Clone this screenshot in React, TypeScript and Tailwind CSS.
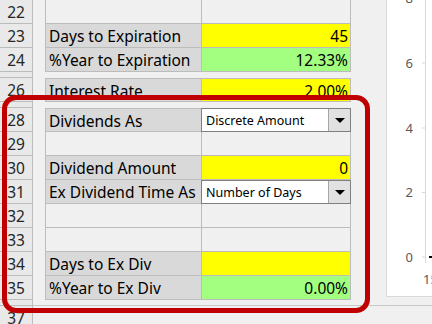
import React from "react";

type Row = {
  n: number;
  kind: "empty" | "value" | "select" | "spacer" | "blank";
  label?: string;
  value?: string;
  fill?: "yellow" | "green";
  top?: boolean;
};

const rows: Row[] = [
  { n: 22, kind: "empty" },
  { n: 23, kind: "value", label: "Days to Expiration", value: "45", fill: "yellow" },
  { n: 24, kind: "value", label: "%Year to Expiration", value: "12.33%", fill: "green" },
  { n: 25, kind: "spacer" },
  { n: 26, kind: "value", label: "Interest Rate", value: "2.00%", fill: "yellow", top: true },
  { n: 27, kind: "spacer" },
  { n: 28, kind: "select", label: "Dividends As", value: "Discrete Amount", top: true },
  { n: 29, kind: "empty" },
  { n: 30, kind: "value", label: "Dividend Amount", value: "0", fill: "yellow" },
  { n: 31, kind: "select", label: "Ex Dividend Time As", value: "Number of Days" },
  { n: 32, kind: "empty" },
  { n: 33, kind: "empty" },
  { n: 34, kind: "value", label: "Days to Ex Div", value: "", fill: "yellow" },
  { n: 35, kind: "value", label: "%Year to Ex Div", value: "0.00%", fill: "green" },
  { n: 36, kind: "spacer" },
  { n: 37, kind: "blank" },
];

const RowHeader = ({ n, small }: { n: number; small?: boolean }) => (
  <div
    className={`w-[33px] shrink-0 border-r border-b border-[#bcbcbc] bg-[#e9e9e9] flex items-center justify-center pt-[3px] text-[15.5px] text-[#262626] ${
      small ? "h-[6px]" : "h-[24px]"
    }`}
  >
    {small ? null : n}
  </div>
);

const Dropdown = ({ text }: { text: string }) => (
  <div className="w-[150px] h-[24px] flex bg-white border border-[#7f7f7f]">
    <div className="flex-1 flex items-center pl-[4px] pt-[2px] text-[12.5px] text-black">{text}</div>
    <div className="w-[22px] flex items-center justify-center bg-[#e1e1e1] border-l border-[#a6a6a6]">
      <div className="w-0 h-0 border-l-[5px] border-r-[5px] border-t-[5px] border-l-transparent border-r-transparent border-t-black mt-[1px]" />
    </div>
  </div>
);

const SheetRow = ({ row }: { row: Row }) => {
  if (row.kind === "spacer") {
    return (
      <div className="flex h-[6px]">
        <RowHeader n={row.n} small />
        <div className={`flex-1 ${row.n === 36 ? "border-b border-[#c8c8c8]" : ""}`} />
      </div>
    );
  }
  if (row.kind === "blank") {
    return (
      <div className="flex h-[24px]">
        <RowHeader n={row.n} />
        <div className="flex-1" />
      </div>
    );
  }
  const t = row.top ? "border-t" : "";
  const fill =
    row.fill === "yellow" ? "bg-[#ffff00]" : row.fill === "green" ? "bg-[#a3ff80]" : "bg-[#f0f0f0]";
  const labelBg = row.kind === "empty" ? "bg-[#f0f0f0]" : "bg-[#d9d9d9]";
  return (
    <div className="flex h-[24px]">
      <RowHeader n={row.n} />
      <div className="w-[12px] shrink-0" />
      <div
        className={`w-[156px] shrink-0 border-l border-b ${t} border-[#bcbcbc] ${labelBg} flex items-center pl-[3px] pt-[3px] text-[15.5px] text-black whitespace-nowrap`}
      >
        {row.label}
      </div>
      {row.kind === "select" ? (
        <Dropdown text={row.value ?? ""} />
      ) : (
        <div
          className={`w-[150px] shrink-0 border-l border-r border-b ${t} border-[#bcbcbc] ${fill} flex items-center justify-end pr-[2px] pt-[3px] text-[15.5px] text-black`}
        >
          {row.value}
        </div>
      )}
    </div>
  );
};

const Chart = () => (
  <div className="absolute left-[386px] top-[-20px] w-[60px] h-[317px] bg-white border-l border-b border-[#d9d9d9]">
    <svg width="60" height="316" className="block">
      <line x1="38.5" y1="0" x2="38.5" y2="283" stroke="#d9d9d9" strokeWidth="1" />
      {[
        { v: "8", y: 18.5 },
        { v: "6", y: 83 },
        { v: "4", y: 148 },
        { v: "2", y: 212.5 },
        { v: "0", y: 277 },
      ].map((t) => (
        <g key={t.v}>
          <line x1="35" y1={t.y} x2="39" y2={t.y} stroke="#d9d9d9" strokeWidth="1" />
          <text
            x="26"
            y={t.y + 4.5}
            textAnchor="end"
            fontSize="13"
            fill="#595959"
            fontFamily="'Noto Sans', sans-serif"
          >
            {t.v}
          </text>
        </g>
      ))}
      <line x1="42" y1="277" x2="50" y2="277" stroke="#000" strokeWidth="2" />
      <text x="36" y="304" fontSize="13" fill="#595959" fontFamily="'Noto Sans', sans-serif">
        15
      </text>
    </svg>
  </div>
);

export default function App() {
  return (
    <div className="relative w-[432px] h-[324px] overflow-hidden bg-[#f0f0f0] font-['Noto_Sans',sans-serif]">
      <div className="flex flex-col">
        {rows.map((r) => (
          <SheetRow key={r.n} row={r} />
        ))}
      </div>
      <Chart />
      <div className="absolute left-[2px] top-[95px] w-[368px] h-[218px] border-[5px] border-[#c00000] rounded-[14px] pointer-events-none" />
    </div>
  );
}
